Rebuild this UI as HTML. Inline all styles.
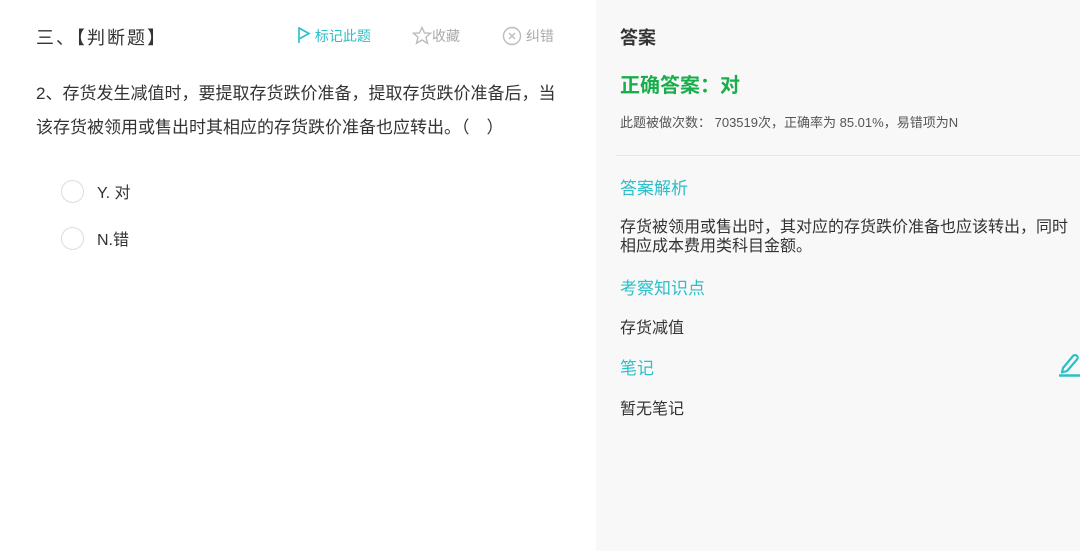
<!DOCTYPE html><html><head><meta charset="utf-8"><style>
*{margin:0;padding:0;box-sizing:border-box}
body{width:1080px;height:551px;overflow:hidden;background:#fff;font-family:"Liberation Sans","Noto Sans CJK SC",sans-serif;color:#333;position:relative}
.a{position:absolute;white-space:nowrap}
#r{position:absolute;left:596px;top:0;width:484px;height:551px;background:#f8f8f9}
.t{color:#2bbfc8;font-size:17px}
</style></head><body>
<div class="a" style="left:36px;top:24px;font-size:18px;letter-spacing:2px">三、【判断题】</div>
<div class="a" style="left:297px;top:26px;font-size:14px;color:#2bbfc8">
<svg width="14" height="18" viewBox="0 0 14 18" style="vertical-align:-3px"><path d="M2 1V17M2 2L12 7.5L2 13" fill="none" stroke="#2bbfc8" stroke-width="1.6"/></svg> 标记此题</div>
<div class="a" style="left:412px;top:26px;font-size:14px;color:#aaa">
<svg width="20" height="19" viewBox="0 0 20 19" style="vertical-align:-4px"><path d="M10 1.5L12.5 7L18.5 7.3L14 11.2L15.5 17.3L10 14L4.5 17.3L6 11.2L1.5 7.3L7.5 7Z" fill="none" stroke="#bbb" stroke-width="1.4"/></svg>收藏</div>
<div class="a" style="left:502px;top:26px;font-size:14px;color:#aaa">
<svg width="20" height="20" viewBox="0 0 20 20" style="vertical-align:-5px"><circle cx="10" cy="10" r="8.5" fill="none" stroke="#bbb" stroke-width="1.4"/><path d="M7 7L13 13M13 7L7 13" stroke="#bbb" stroke-width="1.4"/></svg> 纠错</div>
<div class="a" style="left:36px;top:77px;font-size:17px;line-height:34px">2、存货发生减值时，要提取存货跌价准备，提取存货跌价准备后，当<br>该存货被领用或售出时其相应的存货跌价准备也应转出。（　）</div>
<div class="a" style="left:61px;top:180px;width:23px;height:23px;border:1px solid #ddd;border-radius:50%"></div>
<div class="a" style="left:97px;top:179px;font-size:16px">Y. 对</div>
<div class="a" style="left:61px;top:227px;width:23px;height:23px;border:1px solid #ddd;border-radius:50%"></div>
<div class="a" style="left:97px;top:226px;font-size:16px">N.错</div>
<div id="r">
<div class="a" style="left:24px;top:24px;font-size:18px;font-weight:bold;color:#333">答案</div>
<div class="a" style="left:24px;top:69px;font-size:20px;font-weight:bold;color:#1aad4b">正确答案：对</div>
<div class="a" style="left:24px;top:112px;font-size:13px;color:#555">此题被做次数： 703519次，正确率为 85.01%，易错项为N</div>
<div class="a" style="left:20px;top:155px;width:470px;height:1px;background:#e8e8e8"></div>
<div class="a t" style="left:24px;top:174px">答案解析</div>
<div class="a" style="left:24px;top:218px;font-size:16px;line-height:19px">存货被领用或售出时，其对应的存货跌价准备也应该转出，同时<br>相应成本费用类科目金额。</div>
<div class="a t" style="left:24px;top:274px">考察知识点</div>
<div class="a" style="left:24px;top:314px;font-size:16px">存货减值</div>
<div class="a t" style="left:24px;top:354px">笔记</div>
<svg class="a" style="left:462px;top:351px" width="22" height="26" viewBox="0 0 22 26"><path d="M5 17L15 5A2.5 2.5 0 0 1 19 8.5L9 20L4 21.5Z" fill="none" stroke="#2bbfc8" stroke-width="2.2" stroke-linejoin="round"/><path d="M1 24.5H22" stroke="#2bbfc8" stroke-width="2.4"/></svg>
<div class="a" style="left:24px;top:395px;font-size:16px">暂无笔记</div>
</div>
</body></html>
